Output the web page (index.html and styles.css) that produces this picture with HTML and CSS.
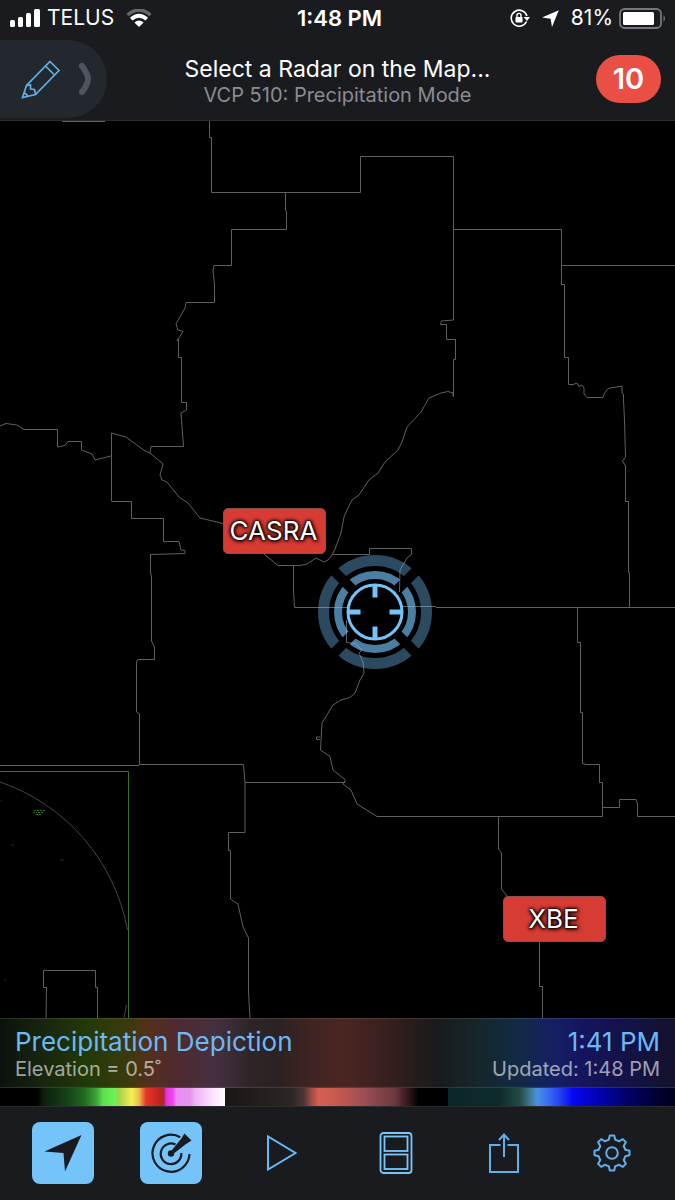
FILE: index.html
```html
<!DOCTYPE html>
<html lang="en">
<head>
    <meta charset="UTF-8">
    <meta name="viewport" content="width=device-width, initial-scale=1.0">
    <title>Radar</title>
    <link rel="stylesheet" href="styles.css">
</head>
<body>
    <div class="status-bar">
        <div class="status-left">
            <svg class="signal" width="31" height="18" viewBox="0 0 31 18" fill="#fff">
                <rect x="0" y="11" width="5" height="7" rx="1.5"/>
                <rect x="8" y="8" width="5" height="10" rx="1.5"/>
                <rect x="16" y="4" width="5" height="14" rx="1.5"/>
                <rect x="24" y="0" width="6" height="18" rx="1.5"/>
            </svg>
            <span>TELUS</span>
            <svg class="wifi" width="26" height="18" viewBox="0 0 26 18" fill="none">
                <path d="M1.500 6Q13 -4 24.500 6" stroke="#66676a" stroke-width="3.4"/>
                <path d="M5.200 10.200Q13 3.200 20.800 10.200" stroke="#fff" stroke-width="3.8"/>
                <path d="M13 18L8.4 13.4Q13 9.800 17.600 13.400Z" fill="#fff"/>
            </svg>
        </div>
        <div class="status-time">1:48 PM</div>
        <div class="status-right">
            <svg width="20" height="18" viewBox="0 0 20 18" fill="none">
                <path d="M16.500 12.500A8 8 0 1 1 16.900 7" stroke="#fff" stroke-width="1.600"/>
                <path d="M13.600 8H20L17 12Z" fill="#fff"/>
                <rect x="5.500" y="8" width="7" height="5.500" rx="0.800" fill="#fff"/>
                <path d="M7 8V6.400A2 2 0 0 1 11 6.400V8" stroke="#fff" stroke-width="1.400"/>
            </svg>
            <svg width="17" height="17" viewBox="0 0 17 17" fill="#fff">
                <path d="M16.800 0.200L10 17L8.600 8.800L0 7.500Z"/>
            </svg>
            <span>81%</span>
            <svg class="battery" width="48" height="21" viewBox="0 0 48 21" fill="none">
                <rect x="1" y="1" width="41" height="19" rx="4.500" stroke="#76777a" stroke-width="1.800"/>
                <rect x="4" y="4" width="31" height="13" rx="1.500" fill="#fff"/>
                <path d="M44.500 7Q47.500 10.500 44.500 14Z" fill="#76777a"/>
            </svg>
        </div>
    </div>

    <header class="header">
        <button class="draw-tab" aria-label="Drawing tools">
            <svg width="40" height="40" viewBox="0 0 40 40" fill="none" stroke="#62aee8" stroke-width="1.700">
                <path d="M29 2.500L38 11.500L14.500 35.500L1.500 38.500L5.500 26.500Z"/>
                <path d="M24.500 7L33.500 16"/>
                <path d="M5.500 26.500L9.500 26L9.500 30L13.500 30.500L14.500 35.500M3 33.500L7 37"/>
            </svg>
            <svg width="16" height="34" viewBox="0 0 16 34" fill="none" stroke="#50545e" stroke-width="6" stroke-linecap="round" stroke-linejoin="round">
                <path d="M4 4Q10 12 10 17Q10 22 4 30"/>
            </svg>
        </button>
        <div class="header-text">
            <h1>Select a Radar on the Map...</h1>
            <p>VCP 510: Precipitation Mode</p>
        </div>
        <button class="alert-count">10</button>
    </header>

    <main class="map">
        <svg class="map-lines" viewBox="0 121 675 897" preserveAspectRatio="xMinYMin slice">
            <!-- county lines -->
            <g class="border-line">
                <path d="M62 121.500H105"/>
                <path d="M209.500 121V137.500H211.500V192.500H360.500V156.500H453.500V320L441.500 321L440.500 324.500H446.500V339.500H455.500V359.500H453.500V397"/>
                <path d="M285.500 192.500V210L286.500 212V229.500H231.500V265.500H214L213 270L214.500 285V302.500H186L185 308L176 324L178 330L183 331.500L177 341L178.500 339V357.500H181.500V402.500H186.500V410L181 413L183.500 446.500H151L150 453"/>
                <path d="M453 396V393L448 391.500L441 393L429 398L421 412L407 427L402 442L398 450L385 462L378 473L369 480L359 495L352 500L348 508L344 517L341 533L335 549L332 555L328 560L324 562L316 558L307 564L300 565.500H278L264 554"/>
                <path d="M0 426L6 423.500L17 425L24 429.500H57.500V447L65 445.500L68 441.500H81.500V450L92 454L95 460L111 456"/>
                <path d="M111.500 501V433L126 437L145 451L150 453L163 464L160 475L162 480L167 482L179 497L188 503L200 518L223 523.500"/>
                <path d="M111.500 501.500H131.500V518.500H163.500V541.500H179L181 550L185 550.500V553.500L168 554L150.500 554.500V572L151.500 577V641L154.500 647V659.500H138L136.500 662V712L139.500 714V764"/>
                <path d="M0 765.500H139M139 764.500H243.500L245 782V832.500H228.500V850.500H230.500V899L238 904L243 927L248.500 938V992L250 1018"/>
                <path d="M245 782.500H345"/>
                <path d="M46 1018L46.500 987.500H43.500V970.500H95.500V987.500H97.500V1018"/>
                <path d="M453.500 229.500H561.500V284.500H564.500V357.500H568.500V384.500H573L577 383L579 386.500L582 385L584 388V394L587 397.500H603L604 394L608 388.500L622 386V393L623.500 394V400L624.500 420L625.500 457L622.500 461L625.500 466V501.500H628.500V572.500H629.500V607"/>
                <path d="M561.500 265.500H675"/>
                <path d="M293.500 565V590L294.500 607.500H360M390 606.500H436M436 607.500H675"/>
                <path d="M333 554.500H369.500V548.500H411.500V554.500L407 558L400 570L399.500 592"/>
                <path d="M346.500 620V642.500L355 643.500L362 650L359 653L363 662L364 673L360 680L355 693L350 697.500L341 700L333 705L322 723L320.500 750L330 756.500L333 770L345.500 780L343 784L351 790L357 804L377 816.500H602.500"/>
                <path d="M320 737H316.500V739.500H320"/>
                <path d="M577.500 607V642.500H580.500V712.500H582.500V763.500L586 764.500H599.500V782.500H602.500V816.500"/>
                <path d="M602.500 807.500H619.500V799.500H636L637.500 804V816.500H675"/>
                <path d="M498.500 816.500V849L501.500 853V889L507 896M539.500 940V986.500H542.500V1018"/>
            </g>
            <!-- radar coverage edge and a few echoes -->
            <path class="coverage-box" d="M0 771.500H128.500V1018"/>
            <path class="coverage-ring" d="M0 782A193 193 0 0 1 127.500 930M126.500 1005L124 1018"/>
            <path class="echo" d="M34 810.500H45M33 812.500H37M38 812.500H44M36 814.500H42"/>
            <path class="echo-faint" d="M0 801H2M11 845H14M60 860H64M4 980H6"/>
        </svg>

        <button class="station station-casra">CASRA</button>
        <button class="station station-xbe">XBE</button>

        <svg class="target" width="116" height="116" viewBox="-58 -58 116 116" fill="none">
            <defs>
                <mask id="gaps" maskUnits="userSpaceOnUse" x="-58" y="-58" width="116" height="116">
                    <rect x="-58" y="-58" width="116" height="116" fill="#fff"/>
                    <path d="M-58 -58L58 58M58 -58L-58 58" stroke="#000" stroke-width="10"/>
                </mask>
            </defs>
            <g mask="url(#gaps)">
                <circle r="51.500" stroke="#73c2f9" stroke-opacity="0.380" stroke-width="11"/>
                <circle r="37" stroke="#73c2f9" stroke-opacity="0.650" stroke-width="8"/>
            </g>
            <circle r="27" fill="#000" stroke="#73c2f9" stroke-width="3"/>
            <path d="M0 -26V-14.500M0 26V14.500M-26 0H-14.500M26 0H14.500" stroke="#73c2f9" stroke-width="5"/>
        </svg>
    </main>

    <section class="product">
        <div class="product-row">
            <h2>Precipitation Depiction</h2>
            <time>1:41 PM</time>
        </div>
        <div class="product-row product-details">
            <span>Elevation = 0.5˚</span>
            <span>Updated: 1:48 PM</span>
        </div>
    </section>
    <div class="color-scale"></div>

    <nav class="toolbar">
        <div class="tool-group">
            <button class="tool active" aria-label="My location">
                <svg width="38" height="38" viewBox="0 0 38 38" fill="#191b20">
                    <path d="M37.500 1L21 37.500L19.500 19L0.500 17.500Z"/>
                </svg>
            </button>
            <button class="tool active" aria-label="Radar">
                <svg width="42" height="42" viewBox="0 0 42 42" fill="none" stroke="#191b20" stroke-width="2.200">
                    <path d="M30.200 5.200A18.500 18.500 0 1 0 39.500 22"/>
                    <path d="M25.500 12.500A10.300 10.300 0 1 0 31.300 21"/>
                    <circle cx="21" cy="21.500" r="3.200" fill="#191b20" stroke="none"/>
                    <path d="M20 20.500L31 7L34.500 1.500L41.500 8.500L36 12L22.500 22.500Z" fill="#191b20" stroke="none"/>
                </svg>
            </button>
            <button class="tool" aria-label="Play">
                <svg width="38" height="38" viewBox="0 0 38 38" fill="none" stroke="#68baf5" stroke-width="2">
                    <path d="M8 2.500V35.500L35.500 19Z"/>
                </svg>
            </button>
        </div>
        <div class="tool-group">
            <button class="tool" aria-label="Split view">
                <svg width="34" height="42" viewBox="0 0 34 42" fill="none" stroke="#79c6fa">
                    <rect x="1.500" y="1" width="31" height="40" rx="3" stroke-width="1.800"/>
                    <rect x="5.500" y="4.500" width="23" height="14.500" stroke-width="1.800"/>
                    <rect x="5.500" y="22.500" width="23" height="14.500" stroke-width="1.800"/>
                </svg>
            </button>
            <button class="tool" aria-label="Share">
                <svg width="32" height="42" viewBox="0 0 32 42" fill="none" stroke="#62aee8" stroke-width="2">
                    <path d="M12.500 13H2V40H30V13H19.500M16 25V3M11 8L16 2.500L21 8"/>
                </svg>
            </button>
            <button class="tool" aria-label="Settings">
                <svg width="38" height="38" viewBox="-19 -19 38 38" fill="none" stroke="#62aee8" stroke-width="2" stroke-linejoin="round">
                    <path d="M-2.200 -17.500H2.200L3.200 -13.300Q5 -12.900 6.900 -11.700L10.800 -13.900L13.900 -10.800L11.700 -6.900Q12.900 -5 13.300 -3.200L17.500 -2.200V2.200L13.300 3.200Q12.900 5 11.700 6.900L13.900 10.800L10.800 13.900L6.900 11.700Q5 12.900 3.200 13.300L2.200 17.500H-2.200L-3.200 13.300Q-5 12.900 -6.900 11.700L-10.800 13.900L-13.900 10.800L-11.700 6.900Q-12.900 5 -13.300 3.200L-17.500 2.200V-2.200L-13.300 -3.200Q-12.900 -5 -11.700 -6.900L-13.900 -10.800L-10.800 -13.900L-6.900 -11.700Q-5 -12.900 -3.200 -13.300Z"/>
                    <circle r="5.800"/>
                </svg>
            </button>
        </div>
    </nav>
</body>
</html>
```
FILE: styles.css
```css
* {
    margin: 0;
    padding: 0;
    box-sizing: border-box;
}

body {
    font-family: Inter, "Liberation Sans", sans-serif;
    background: #191b1f;
    color: #fff;
    min-height: 100vh;
    display: flex;
    flex-direction: column;
}

button {
    font-family: inherit;
    border: none;
    background: none;
    color: inherit;
    cursor: pointer;
}

svg {
    display: block;
    flex: none;
}

/* status bar */
.status-bar {
    display: grid;
    grid-template-columns: 1fr auto 1fr;
    align-items: center;
    height: 38px;
    padding: 0 10px 2px;
    font-size: 21px;
    line-height: 36px;
}

.status-left,
.status-right {
    display: flex;
    align-items: center;
    gap: 6px;
}

.wifi {
    margin-left: 6px;
}

.status-right {
    justify-content: flex-end;
    gap: 12px;
}

.battery {
    margin: 0 -2px 0 -6px;
}

.status-time {
    padding-left: 4px;
    font-size: 22px;
    font-weight: 600;
}

/* header */
.header {
    display: grid;
    grid-template-columns: 1fr auto 1fr;
    align-items: center;
    height: 83px;
    border-bottom: 1px solid #2b2c30;
}

.draw-tab {
    display: flex;
    align-items: center;
    justify-self: start;
    gap: 17px;
    width: 107px;
    height: 78px;
    padding-left: 21px;
    background: #23272e;
    border-radius: 0 39px 39px 0;
}

.header-text {
    padding-top: 4px;
    text-align: center;
}

.header-text h1 {
    font-size: 23px;
    font-weight: 400;
    line-height: 28px;
}

.header-text p {
    font-size: 20px;
    line-height: 24px;
    color: #8b8c8f;
}

.alert-count {
    justify-self: end;
    width: 65px;
    height: 48px;
    margin-right: 14px;
    border-radius: 24px;
    background: #e94f45;
    font-size: 29px;
    font-weight: 600;
    line-height: 46px;
}

/* map */
.map {
    position: relative;
    flex: 1;
    min-height: 400px;
    background: #000;
    overflow: hidden;
}

.map-lines {
    position: absolute;
    width: 100%;
    height: 100%;
    fill: none;
    stroke-width: 1px;
}

.border-line {
    stroke: #606060;
}

.coverage-box {
    stroke: #36702a;
}

.coverage-ring {
    stroke: #454545;
}

.echo {
    stroke: #2f7318;
    stroke-dasharray: 2 1;
}

.echo-faint {
    stroke: #222a20;
}

.station {
    position: absolute;
    width: 103px;
    height: 46px;
    padding: 0 2px 2px 0;
    border: 1px solid #8f4d48;
    border-radius: 5px;
    background: #d63b34;
    font-size: 26px;
    text-shadow: 0 0 2px #000, 0 0 3px #000, 0 0 4px #000, 1px 1px 4px #000;
}

.station-casra {
    left: 223px;
    top: 387px;
}

.station-xbe {
    left: 503px;
    top: 775px;
}

.target {
    position: absolute;
    left: 317px;
    top: 433px;
}

/* product info */
.product {
    height: 70px;
    padding: 8px 15px;
    border-top: 1px solid rgba(255, 255, 255, 0.12);
    border-bottom: 1px solid rgba(255, 255, 255, 0.12);
    background: linear-gradient(90deg, #0b120c 0%, #17240f 6%, #223a08 13%, #3c3a0c 19%, #53301c 22%, #4f2a30 26%, #443040 32%, #2f2528 37%, #2a2222 41%, #3f2422 46%, #4a2622 51%, #3c211f 56%, #271c1c 61%, #191b1c 65%, #16262b 71%, #122a45 77%, #142063 82%, #15155f 86%, #14124a 92%, #12122c 100%);
}

.product-row {
    display: flex;
    justify-content: space-between;
    font-size: 26px;
    line-height: 30px;
    color: #6bb9f5;
}

.product-row h2 {
    font-size: 26px;
    font-weight: 400;
}

.product-details {
    font-size: 20px;
    line-height: 24px;
    color: rgba(255, 255, 255, 0.6);
}

.color-scale {
    height: 19px;
    border-bottom: 1px solid #2b2c30;
    background: linear-gradient(90deg,
        #000 0%, #000 5.500%, #0d200c 6.500%, #17421a 10%, #1f6b1f 12.500%, #3da637 14.300%, #5fe04e 15.300%, #6bf255 17%,
        #a5d24a 17.600%, #f5f052 19.500%, #e8c048 20.600%, #ee8540 21%, #e8352a 21.600%, #c0241f 23.700%, #a02a30 24.200%,
        #e636e0 24.700%, #ee45f5 25.600%, #e98cf0 26.100%, #e795ee 28.200%, #f0b5f5 29%, #fce8fd 31.800%, #fff 33.300%,
        #1a1614 33.300%, #2b2624 43%, #4a3633 45%, #a54d45 46.200%, #d65f54 47.200%, #c95a4c 49.700%, #9f5055 53.500%,
        #6c383f 58.500%, #150a0c 61.400%, #000 62%, #000 66.400%,
        #0b2626 66.400%, #0e2b2b 74%, #234a42 77%, #3f7890 78.500%, #4a90e0 79.600%, #3a6cf8 81.200%, #2340f0 83%,
        #0808f5 84.800%, #0303c5 87.500%, #010160 93.300%, #00002e 98%, #000020 100%);
}

/* toolbar */
.toolbar {
    display: flex;
    justify-content: space-between;
    height: 93px;
    padding: 15px 32px;
}

.tool-group {
    display: flex;
    gap: 46px;
}

.tool {
    display: flex;
    align-items: center;
    justify-content: center;
    width: 62px;
    height: 62px;
    border-radius: 8px;
}

.tool.active {
    background: #75c4f9;
}
```
